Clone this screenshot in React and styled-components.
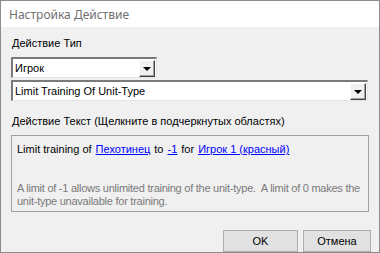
import React from "react";
import styled, { createGlobalStyle } from "styled-components";

const GlobalStyle = createGlobalStyle`
  html, body {
    margin: 0;
    padding: 0;
    background: #ffffff;
  }
  body {
    font-family: "Liberation Sans", Arial, sans-serif;
  }
`;

const Window = styled.div`
  width: 380px;
  height: 253px;
  box-sizing: border-box;
  border: 1px solid #8c8c8c;
  display: flex;
  flex-direction: column;
  background: #f0f0f0;
`;

const TitleBar = styled.div`
  height: 30px;
  background: #ffffff;
  display: flex;
  align-items: center;
  padding-left: 8px;
  font-family: "Noto Sans", "Open Sans", sans-serif;
  font-size: 12px;
  color: #6f6f6f;
`;

const Body = styled.div`
  flex: 1;
  display: flex;
  flex-direction: column;
  padding: 9px 8px 0 10px;
  font-size: 11px;
  color: #000;
`;

const Label = styled.div`
  height: 14px;
  line-height: 14px;
  padding-left: 1px;
  margin-top: ${({ top }) => top || 0}px;
  margin-bottom: ${({ gap }) => gap}px;
`;

const Combo = styled.div`
  width: ${({ w }) => w}px;
  height: 21px;
  box-sizing: border-box;
  background: #fff;
  border-top: 2px solid #7a7a7a;
  border-left: 2px solid #7a7a7a;
  border-right: 1px solid #e3e3e3;
  border-bottom: 1px solid #e3e3e3;
  display: flex;
  align-items: center;
  margin-bottom: ${({ gap }) => gap || 0}px;
`;

const ComboText = styled.span`
  flex: 1;
  padding-left: 2px;
  line-height: 14px;
`;

const DropButton = styled.div`
  width: 16px;
  height: 17px;
  box-sizing: border-box;
  margin-right: 1px;
  background: #f0f0f0;
  border-top: 1px solid #ffffff;
  border-left: 1px solid #ffffff;
  border-right: 1px solid #404040;
  border-bottom: 1px solid #404040;
  box-shadow: inset -1px -1px 0 #a0a0a0;
  display: flex;
  align-items: center;
  justify-content: center;
`;

const Arrow = styled.div`
  width: 0;
  height: 0;
  border-left: 4px solid transparent;
  border-right: 4px solid transparent;
  border-top: 4px solid #000;
  margin-top: 1px;
`;

const TextBox = styled.div`
  height: 77px;
  width: 358px;
  box-sizing: border-box;
  border: 1px solid #a0a0a0;
  padding: 6px 0 3px 5px;
  display: flex;
  flex-direction: column;
  justify-content: space-between;
`;

const Sentence = styled.div`
  line-height: 14px;
`;

const Link = styled.span`
  color: #0000ff;
  text-decoration: underline;
  margin: 0 4px;
`;

const Hint = styled.div`
  color: #7a7a7a;
  line-height: 13px;
  white-space: nowrap;
  letter-spacing: -0.25px;
`;

const Footer = styled.div`
  display: flex;
  justify-content: flex-end;
  gap: 5px;
  margin-top: 18px;
`;

const Button = styled.div`
  width: ${({ w }) => w}px;
  height: 22px;
  box-sizing: border-box;
  background: #e1e1e1;
  border: 1px solid #adadad;
  display: flex;
  align-items: center;
  justify-content: center;
`;

const ComboBox = ({ value, width, gap }) => (
  <Combo w={width} gap={gap}>
    <ComboText>{value}</ComboText>
    <DropButton>
      <Arrow />
    </DropButton>
  </Combo>
);

export default function App() {
  return (
    <>
      <GlobalStyle />
      <Window>
        <TitleBar>Настройка Действие</TitleBar>
        <Body>
          <Label gap={7}>Действие Тип</Label>
          <ComboBox value="Игрок" width={146} gap={2} />
          <ComboBox value="Limit Training Of Unit-Type" width={357} />
          <Label top={13} gap={7}>
            Действие Текст (Щелкните в подчеркнутых областях)
          </Label>
          <TextBox>
            <Sentence>
              Limit training of
              <Link>Пехотинец</Link>to
              <Link>-1</Link>for
              <Link>Игрок 1 (красный)</Link>
            </Sentence>
            <Hint>
              A limit of -1 allows unlimited training of the unit-type.&nbsp; A limit of 0 makes the
              <br />
              unit-type unavailable for training.
            </Hint>
          </TextBox>
          <Footer>
            <Button w={75}>OK</Button>
            <Button w={68}>Отмена</Button>
          </Footer>
        </Body>
      </Window>
    </>
  );
}
